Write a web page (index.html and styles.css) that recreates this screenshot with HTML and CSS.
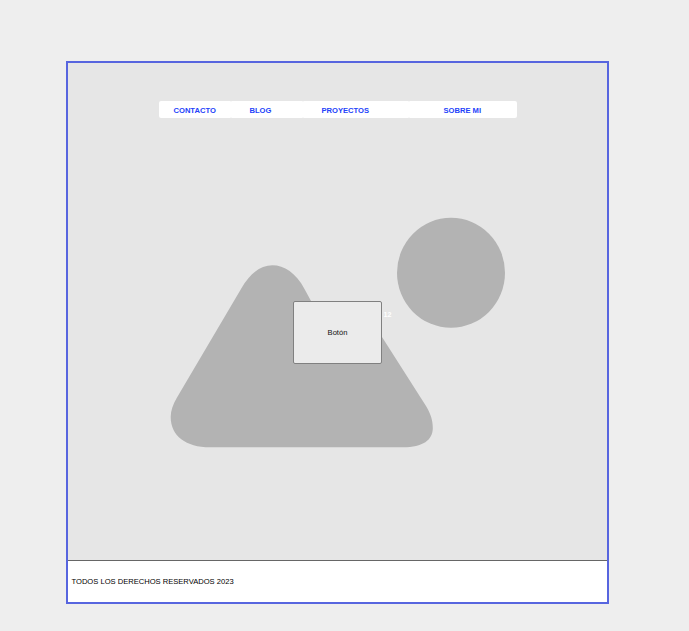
FILE: index.html
```html
<!DOCTYPE html>
<html lang="es">
<head>
<meta charset="utf-8">
<title>Portafolio</title>
<link rel="stylesheet" href="styles.css">
</head>
<body>
<div class="frame">
  <main class="hero">
    <nav class="nav">
      <a class="nav-item contact">CONTACTO</a>
      <a class="nav-item blog">BLOG</a>
      <a class="nav-item projects">PROYECTOS</a>
      <a class="nav-item about">SOBRE MI</a>
    </nav>
    <svg class="picture" viewBox="68 63 539 497" aria-hidden="true">
      <path d="M241 289C250 273 261 265.300 272.500 265.300C284 265.300 296 273 304.500 289L311.300 301.500L382 337L426 406C430.500 413.500 432.800 420 432.800 428C432.800 440 423 447.300 403 447.300H210C186 447.300 170.700 436 170.700 417C170.700 411 173 404 177 397.500Z"/>
      <ellipse cx="451" cy="272.800" rx="54" ry="55"/>
    </svg>
    <button class="button">Botón</button>
    <span class="count">12</span>
  </main>
  <footer class="footer">TODOS LOS DERECHOS RESERVADOS 2023</footer>
</div>
</body>
</html>
```

FILE: styles.css
```css
* { box-sizing: border-box; }
body {
  margin: 0;
  padding: 61px 0 0 66px;
  background: #eee;
  font-family: "Liberation Sans", Arial, sans-serif;
  font-size: 7.58px;
  color: #000;
}
.frame {
  width: 543px;
  height: 543px;
  border: 2px solid #5765df;
  display: flex;
  flex-direction: column;
}
.hero {
  position: relative;
  flex: 1;
  padding: 38px 0 0 90.5px;
  background: #e6e6e6;
}
.nav {
  position: relative;
  z-index: 1;
  display: grid;
  grid-template-columns: 72px 72px 106px 108.5px;
  grid-template-rows: 17px;
  width: 358.5px;
}
.nav-item {
  height: 17px;
  background: #fff;
  border-radius: 1px;
  line-height: 19px;
  font-weight: bold;
  font-size: 7.6px;
  color: #2443fa;
  white-space: nowrap;
}
.contact { padding-left: 15px; border-radius: 2px 1px 1px 2px; }
.blog { padding-left: 19px; }
.projects { padding-left: 19px; }
.about { padding-left: 35px; border-radius: 1px 2px 2px 1px; }
.picture {
  position: absolute;
  left: 0;
  top: 0;
  width: 539px;
  height: 497px;
  fill: #b3b3b3;
}
.button {
  position: absolute;
  left: 225px;
  top: 238px;
  width: 89px;
  height: 63px;
  padding: 0;
  border: 1px solid #808080;
  border-radius: 2px;
  background: #ebebeb;
  font-family: inherit;
  font-size: 7.6px;
  color: #111;
}
.count {
  position: absolute;
  left: 315.5px;
  top: 247px;
  line-height: 10px;
  font-size: 7.2px;
  font-weight: bold;
  color: #fff;
}
.footer {
  height: 42px;
  padding-left: 3.5px;
  border-top: 1px solid #666;
  background: #fff;
  line-height: 42px;
}
```
